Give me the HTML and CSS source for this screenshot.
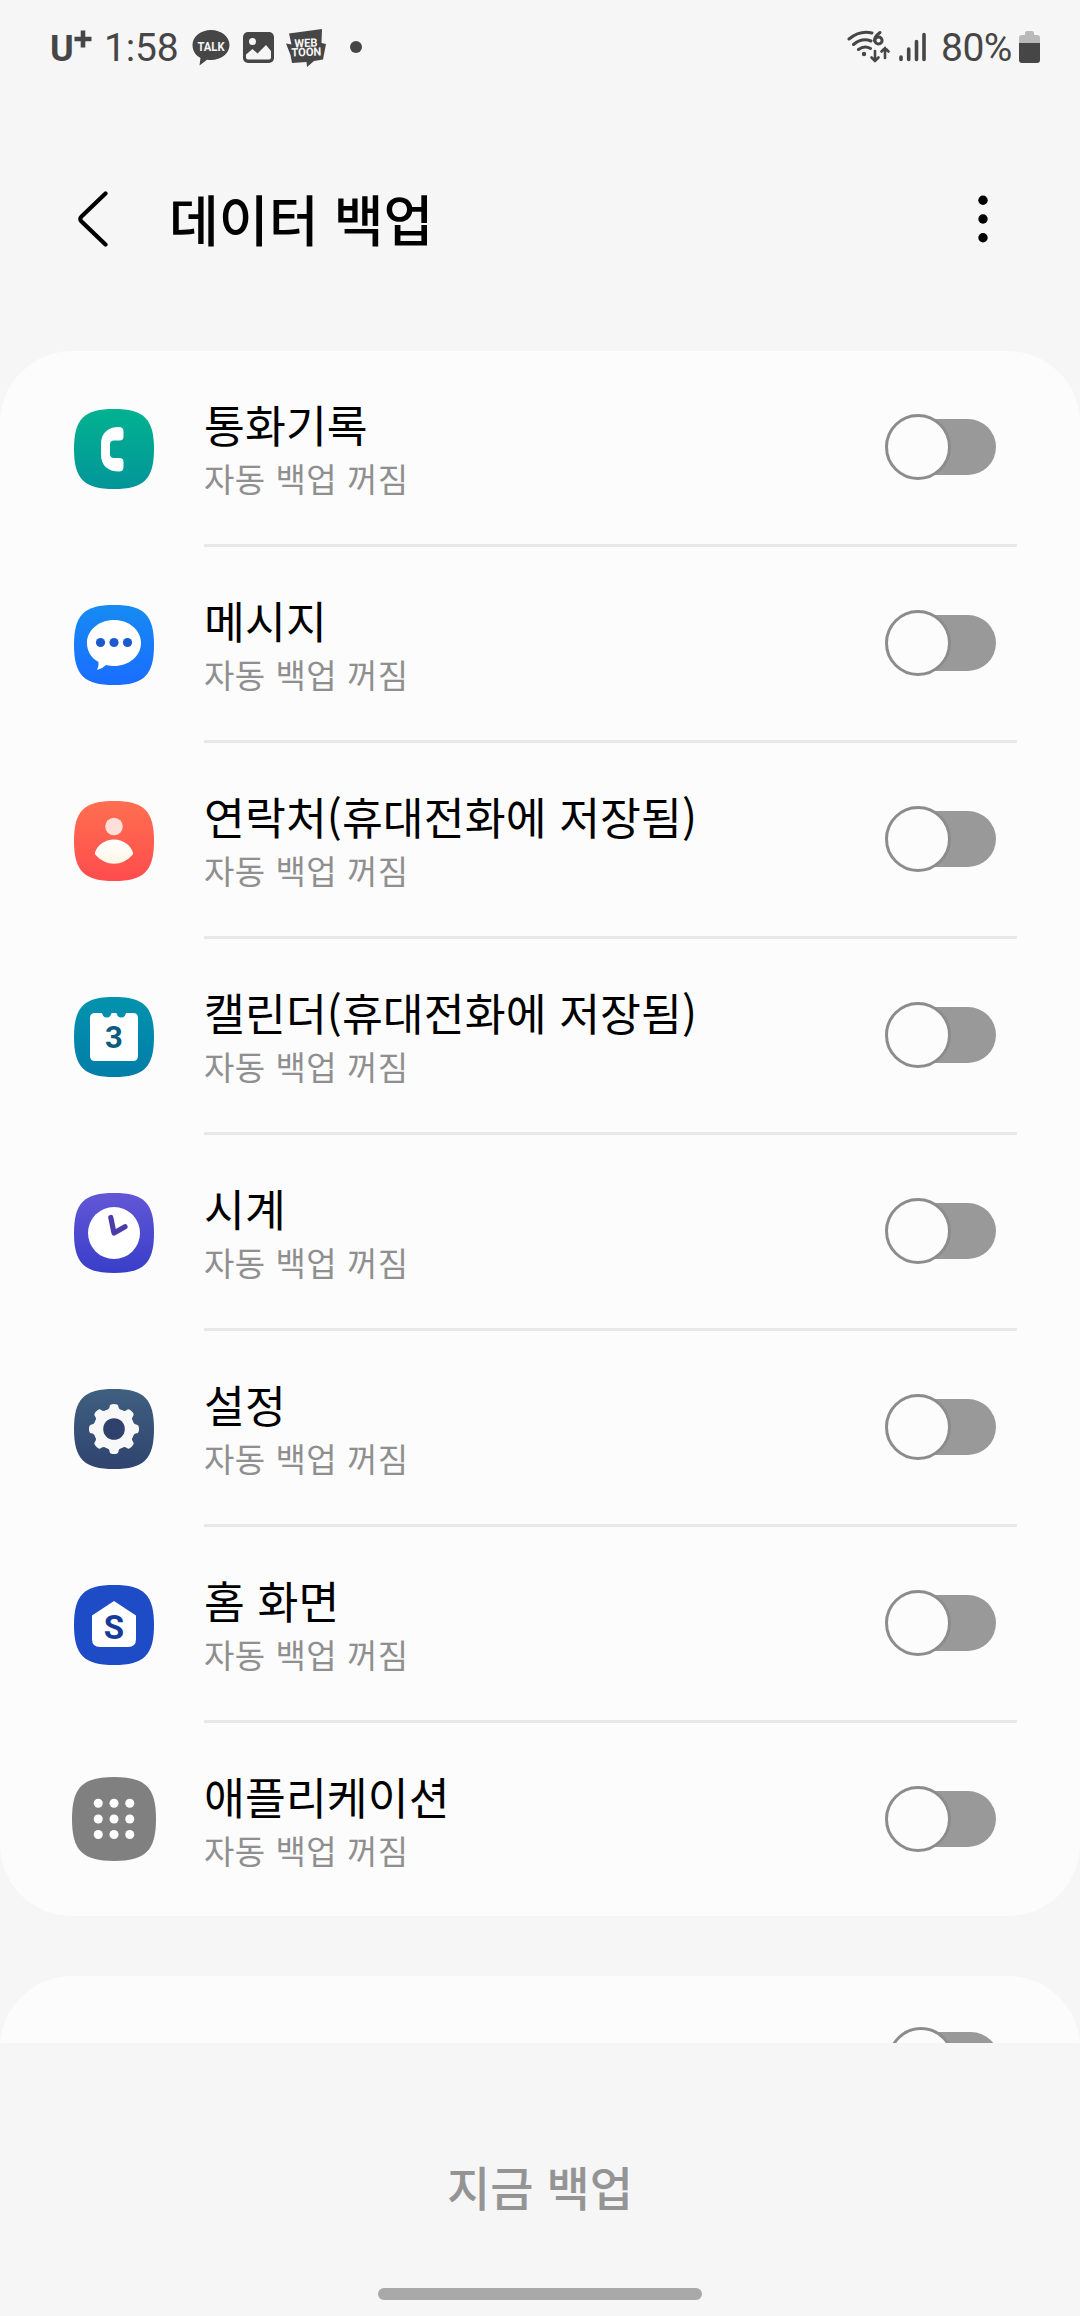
FILE: index.html
```html
<!DOCTYPE html>
<html lang="ko">
<head>
<meta charset="utf-8">
<title>데이터 백업</title>
<link rel="stylesheet" href="styles.css">
</head>
<body>
<svg class="defs" aria-hidden="true">
  <defs>
    <path id="tile" d="M40 0C70 0 80 10 80 40S70 80 40 80 0 70 0 40 10 0 40 0Z"/>
    <linearGradient id="g-call" x2="0" y2="1"><stop stop-color="#02b290"/><stop offset="1" stop-color="#029599"/></linearGradient>
    <linearGradient id="g-msg" x2="0" y2="1"><stop stop-color="#168bf2"/><stop offset="1" stop-color="#1a6dff"/></linearGradient>
    <linearGradient id="g-contact" x2="0" y2="1"><stop stop-color="#ff6f50"/><stop offset="1" stop-color="#ff4c4d"/></linearGradient>
    <linearGradient id="g-body" x2="0" y2="1"><stop stop-color="#ffffff"/><stop offset="1" stop-color="#fff5e6"/></linearGradient>
    <linearGradient id="g-cal" x2="0" y2="1"><stop stop-color="#0293ae"/><stop offset="1" stop-color="#027da8"/></linearGradient>
    <linearGradient id="g-clock" x2="0" y2="1"><stop stop-color="#6257d6"/><stop offset="1" stop-color="#393ec9"/></linearGradient>
    <linearGradient id="g-set" x2="0" y2="1"><stop stop-color="#3f5f80"/><stop offset="1" stop-color="#2f446f"/></linearGradient>
  </defs>
</svg>
<div class="screen">
  <div class="status">
    <div class="status-left">
      <div class="carrier"><span class="carrier-u">U</span><svg width="18" height="18" viewBox="0 0 18 18"><path d="M9 .5v17M.5 9h17" stroke="#464646" stroke-width="4.600"/></svg></div>
      <span class="clock">1:58</span>
      <svg class="talk" width="38" height="36" viewBox="0 0 38 36"><path d="M19 0C29 0 37.500 6.500 37.500 15S29 30 19 30q-2 0-4-.3L7.500 35.500 8.500 28C3 25 .5 20 .5 15 .5 6.500 9 0 19 0Z" fill="#464646"/><text class="badge" x="5.500" y="20.500" font-size="13" textLength="27" lengthAdjust="spacingAndGlyphs">TALK</text></svg>
      <svg class="photo" width="31" height="31" viewBox="0 0 31 31"><rect width="31" height="31" rx="5" fill="#464646"/><circle cx="9.500" cy="9.500" r="3.500" fill="#f6f6f6"/><path d="M3 22.500 9.500 17l5 4.500L23 13l5 6v6.500q0 2-2 2H5q-2 0-2-2Z" fill="#f6f6f6"/></svg>
      <svg class="toon" width="40" height="38" viewBox="0 0 40 38"><path d="M3 4.500 36 0l-.5 14 4.500 1-3 15.500-9 1.500-7 6-.5-5L6 34 4.500 26 0 14.500l5.500 1Z" fill="#464646"/><text class="badge" x="8.500" y="18" font-size="11.500" textLength="23" lengthAdjust="spacingAndGlyphs" transform="rotate(-2 20 18)">WEB</text><text class="badge" x="5.500" y="27" font-size="11.500" textLength="30" lengthAdjust="spacingAndGlyphs" transform="rotate(-2 20 27)">TOON</text></svg>
      <span class="more-dot"></span>
    </div>
    <div class="status-right">
      <svg class="wifi" width="44" height="34" viewBox="0 0 44 34" fill="none" stroke="#464646" stroke-width="3" stroke-linecap="round"><path d="M2 9Q13 0 25 3M6.500 14.500Q15 7.500 24 11M11.500 19.500q6-4.500 12-1"/><circle cx="17" cy="24" r="2.200" fill="#464646" stroke="none"/><path d="M33 2.500q-6 4.500-5.500 8"/><circle cx="31.500" cy="10.500" r="3.600"/><path d="M28 21v10m-3.500-3.500L28 31l3.500-3.500M38 28V18m-3.500 3.500L38 18l3.500 3.500" stroke-width="2.600"/></svg>
      <svg class="signal" width="28" height="30" viewBox="0 0 28 30" stroke="#464646" stroke-width="3.600" stroke-linecap="round"><path d="M2 25v2.500M9.700 17v10.500M17.500 9.500v18M25 2.500v25"/></svg>
      <span class="percent">80%</span>
      <svg class="battery" width="21" height="32" viewBox="0 0 21 32"><path d="M6 2q0-2 2-2h5q2 0 2 2v2h3q3 0 3 3v6H0V7q0-3 3-3h3Z" fill="#b9b9b9"/><path d="M0 12h21v17q0 3-3 3H3q-3 0-3-3Z" fill="#464646"/></svg>
    </div>
  </div>

  <header class="appbar">
    <svg class="back" width="30" height="56" viewBox="0 0 30 56"><path d="M27.500 2.500 3.500 25.500q-2.500 2.500 0 5L27.500 53.500" fill="none" stroke="#000" stroke-width="4.200" stroke-linecap="round"/></svg>
    <h1 class="heading">데이터 백업</h1>
    <svg class="menu" width="10" height="48" viewBox="0 0 10 48"><circle cx="5" cy="5.200" r="4.700"/><circle cx="5" cy="24" r="4.700"/><circle cx="5" cy="42.800" r="4.700"/></svg>
  </header>

  <main class="list">
    <section class="card">
      <div class="row">
        <svg class="icon" viewBox="0 0 80 80"><use href="#tile" fill="url(#g-call)"/><path d="M45 18q4.500 0 4.500 4.500v5q0 4-4 4h-5.500q-4 0-4 4v9.500q0 4 4 4h5.500q4 0 4 4v5q0 4.500-4.500 4.500c-11 0-18-6-18-17V35c0-11 7-17 18-17Z" fill="#fff"/></svg>
        <div class="entry"><div class="text"><div class="name">통화기록</div><div class="state">자동 백업 꺼짐</div></div><span class="toggle"></span></div>
      </div>
      <div class="row">
        <svg class="icon" viewBox="0 0 80 80"><use href="#tile" fill="url(#g-msg)"/><path d="M40 15c15 0 27 10 27 23S55 61 40 61q-4 0-8-1-4 4-9 5 2-4 1.500-8C17 53 13 46 13 38c0-13 12-23 27-23Z" fill="#fff"/><g fill="#1b5bd1"><circle cx="26.500" cy="37.500" r="4.600"/><circle cx="40" cy="37.500" r="4.600"/><circle cx="53.500" cy="37.500" r="4.600"/></g></svg>
        <div class="entry"><div class="text"><div class="name">메시지</div><div class="state">자동 백업 꺼짐</div></div><span class="toggle"></span></div>
      </div>
      <div class="row">
        <svg class="icon" viewBox="0 0 80 80"><use href="#tile" fill="url(#g-contact)"/><circle cx="40" cy="25.500" r="8.800" fill="#ffdfd8"/><path d="M40 38.500c9 0 16.500 5.500 19 13q.4 1.500-.6 2.500-8 8.700-18.400 8.700T21.600 54q-1-1-.6-2.500c2.500-7.500 10-13 19-13Z" fill="url(#g-body)"/></svg>
        <div class="entry"><div class="text"><div class="name">연락처(휴대전화에 저장됨)</div><div class="state">자동 백업 꺼짐</div></div><span class="toggle"></span></div>
      </div>
      <div class="row">
        <svg class="icon" viewBox="0 0 80 80"><use href="#tile" fill="url(#g-cal)"/><path d="M21 16h6.500q.8 0 1 1.500a4.500 4.500 0 0 0 8.500 0q.2-1.500 1-1.500h4q.8 0 1 1.500a4.500 4.500 0 0 0 8.500 0q.2-1.500 1-1.500H59q5 0 5 5v38q0 5-5 5H21q-5 0-5-5V21q0-5 5-5Z" fill="#fff"/><text class="glyph" x="40" y="51" font-size="31" fill="#095c7d">3</text></svg>
        <div class="entry"><div class="text"><div class="name">캘린더(휴대전화에 저장됨)</div><div class="state">자동 백업 꺼짐</div></div><span class="toggle"></span></div>
      </div>
      <div class="row">
        <svg class="icon" viewBox="0 0 80 80"><use href="#tile" fill="url(#g-clock)"/><circle cx="40" cy="40" r="26" fill="#fff"/><path d="M36.800 24.500 40 40l11-6.300" fill="none" stroke="#4a3cab" stroke-width="5.200" stroke-linecap="round" stroke-linejoin="round"/></svg>
        <div class="entry"><div class="text"><div class="name">시계</div><div class="state">자동 백업 꺼짐</div></div><span class="toggle"></span></div>
      </div>
      <div class="row">
        <svg class="icon" viewBox="0 0 80 80"><use href="#tile" fill="url(#g-set)"/><g fill="#f8f8f8"><circle cx="40" cy="40" r="20.500"/><g id="teeth"><path id="tooth" d="M31.500 22q4-1.500 4.200-5 .3-2 4.300-2t4.300 2q.2 3.500 4.200 5v36q-4 1.500-4.200 5-.3 2-4.300 2t-4.300-2q-.2-3.500-4.200-5Z"/><use href="#tooth" transform="rotate(90 40 40)"/></g><use href="#teeth" transform="rotate(45 40 40)"/></g><circle cx="40" cy="40" r="10.800" fill="#2f426d"/></svg>
        <div class="entry"><div class="text"><div class="name">설정</div><div class="state">자동 백업 꺼짐</div></div><span class="toggle"></span></div>
      </div>
      <div class="row">
        <svg class="icon" viewBox="0 0 80 80"><use href="#tile" fill="#1e4bc6"/><path d="M40 16 62 30.500V54q0 8-8 8H26q-8 0-8-8V30.500Z" fill="#fff"/><text class="glyph" x="40" y="53.500" font-size="33" fill="#163b98">S</text></svg>
        <div class="entry"><div class="text"><div class="name">홈 화면</div><div class="state">자동 백업 꺼짐</div></div><span class="toggle"></span></div>
      </div>
      <div class="row">
        <svg class="icon icon-apps" viewBox="0 0 80 80"><use href="#tile" fill="#808080"/><g fill="#fff"><circle cx="25" cy="25" r="4.300"/><circle cx="40" cy="25" r="4.300"/><circle cx="55" cy="25" r="4.300"/><circle cx="25" cy="40" r="4.300"/><circle cx="40" cy="40" r="4.300"/><circle cx="55" cy="40" r="4.300"/><circle cx="25" cy="54.800" r="4.300"/><circle cx="40" cy="54.800" r="4.300"/><circle cx="55" cy="54.800" r="4.300"/></g></svg>
        <div class="entry"><div class="text"><div class="name">애플리케이션</div><div class="state">자동 백업 꺼짐</div></div><span class="toggle"></span></div>
      </div>
    </section>
    <section class="card card-next"><span class="toggle"></span></section>
  </main>

  <footer class="actions">
    <button class="backup" disabled>지금 백업</button>
    <div class="home-bar"></div>
  </footer>
</div>
</body>
</html>
```
FILE: styles.css
```css
*, *::before, *::after { box-sizing: border-box; }

body {
  margin: 0;
  background: #f6f6f6;
  color: #000;
  font-family: "Noto Sans CJK KR", sans-serif;
}

svg { display: block; flex: none; }

.defs { position: absolute; width: 0; height: 0; }

.screen {
  display: flex;
  flex-direction: column;
  width: 1080px;
  height: 2316px;
  overflow: hidden;
}

/* Status bar */
.status {
  display: flex;
  justify-content: space-between;
  height: 96px;
  padding: 28px 40px 0 50px;
  color: #464646;
  font: 39px/40px Roboto, sans-serif;
}

.status-left, .status-right { display: flex; align-items: flex-start; }

.carrier { display: flex; width: 44px; padding-top: 2px; }
.carrier-u { width: 24px; font-size: 36px; font-weight: 700; line-height: 39px; }
.clock { width: 74px; margin-left: 10px; letter-spacing: -0.2px; }
.talk { margin: 2px 0 0 14px; }
.photo { margin: 4px 0 0 13px; }
.toon { margin: 1px 0 0 12px; }
.more-dot { width: 12px; height: 12px; margin: 13px 0 0 24px; border-radius: 50%; background: #464646; }
.badge { font-family: Roboto, sans-serif; font-weight: 700; fill: #f6f6f6; }

.wifi { margin-top: 2px; }
.signal { margin: 4px 0 0 8px; }
.percent { width: 72px; margin-left: 14px; letter-spacing: -0.5px; }
.battery { margin: 3px 0 0 6px; }

/* App bar */
.appbar {
  display: flex;
  align-items: center;
  height: 246px;
  margin-bottom: 9px;
  padding: 0 92px 0 78px;
}

.heading {
  flex: 1;
  margin: 0 0 2px 61px;
  font-size: 54.2px;
  font-weight: 500;
  line-height: 70px;
}

/* List */
.list {
  display: flex;
  flex-direction: column;
  gap: 60px;
  height: 1692px;
  overflow: hidden;
}

.card {
  flex: none;
  border-radius: 72px;
  background: #fcfcfc;
}

.row {
  display: flex;
  align-items: center;
  height: 196px;
  padding: 0 63px 0 74px;
}

.icon { width: 80px; height: 80px; }
.icon-apps { width: 84px; height: 84px; margin: 0 -2px 1px; }

.entry {
  display: flex;
  flex: 1;
  align-items: center;
  height: 196px;
  margin-left: 50px;
  padding-right: 21px;
  border-bottom: 3px solid #e8e8e8;
}

.row:last-child, .row:last-child .entry { height: 193px; border-bottom: 0; }

.text { flex: 1; padding-top: 4px; }

.name { font-size: 44.4px; line-height: 50px; letter-spacing: 0.1px; }
.state { margin-top: 6px; color: #8f8f8f; font-size: 33px; line-height: 46px; letter-spacing: 0.5px; }

.toggle {
  position: relative;
  flex: none;
  width: 111px;
  height: 66px;
  margin-bottom: 1px;
}

.toggle::before, .toggle::after { position: absolute; content: ""; }

.toggle::before {
  inset: 5px 0 5px 5px;
  border-radius: 28px;
  background: #999;
}

.toggle::after {
  top: 0;
  left: 0;
  width: 66px;
  height: 66px;
  border: 3px solid #8c8c8c;
  border-radius: 50%;
  background: #fcfcfc;
}

.card-next {
  display: flex;
  justify-content: flex-end;
  height: 196px;
  padding: 51px 81px 0 0;
}

/* Bottom action */
.actions {
  display: flex;
  flex: 1;
  flex-direction: column;
  align-items: center;
  padding-top: 113px;
}

.backup {
  padding: 0;
  border: 0;
  background: none;
  color: #949494;
  font: 500 47px/60px "Noto Sans CJK KR", sans-serif;
}

.home-bar {
  width: 324px;
  height: 12px;
  margin-top: 72px;
  border-radius: 6px;
  background: #a9a9a9;
}

/* Characters inside app icons */
.glyph {
  font-family: Roboto, sans-serif;
  font-weight: 700;
  text-anchor: middle;
}
```
